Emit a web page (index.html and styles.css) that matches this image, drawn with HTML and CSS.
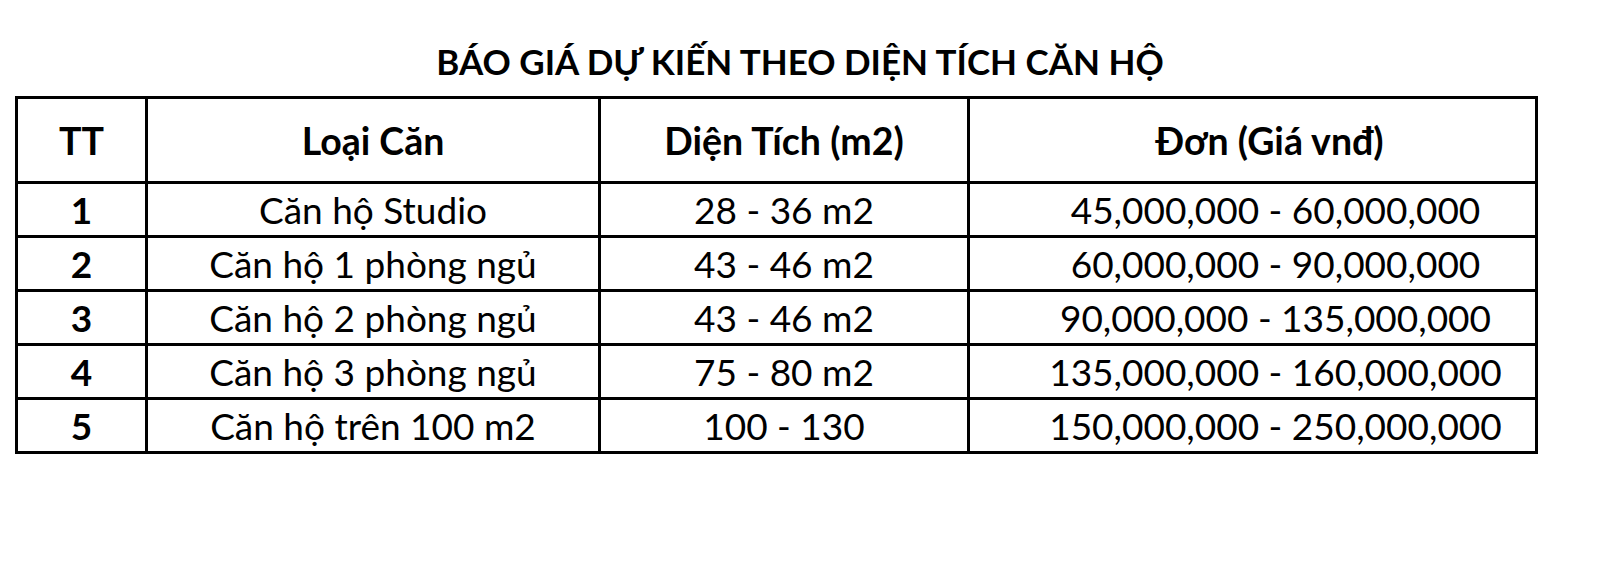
FILE: index.html
```html
<!DOCTYPE html>
<html lang="vi">
<head>
<meta charset="utf-8">
<link rel="stylesheet" href="styles.css">
</head>
<body>
<div class="page">
  <h1 class="title">BÁO GIÁ DỰ KIẾN THEO DIỆN TÍCH CĂN HỘ</h1>
  <table class="price">
    <colgroup>
      <col class="c1"><col class="c2"><col class="c3"><col class="c4">
    </colgroup>
    <thead>
      <tr><th>TT</th><th>Loại Căn</th><th>Diện Tích (m2)</th><th class="price-col">Đơn (Giá vnđ)</th></tr>
    </thead>
    <tbody>
      <tr><td class="num">1</td><td>Căn hộ Studio</td><td>28 - 36 m2</td><td class="price-col">45,000,000 - 60,000,000</td></tr>
      <tr><td class="num">2</td><td>Căn hộ 1 phòng ngủ</td><td>43 - 46 m2</td><td class="price-col">60,000,000 - 90,000,000</td></tr>
      <tr><td class="num">3</td><td>Căn hộ 2 phòng ngủ</td><td>43 - 46 m2</td><td class="price-col">90,000,000 - 135,000,000</td></tr>
      <tr><td class="num">4</td><td>Căn hộ 3 phòng ngủ</td><td>75 - 80 m2</td><td class="price-col">135,000,000 - 160,000,000</td></tr>
      <tr><td class="num">5</td><td>Căn hộ trên 100 m2</td><td>100 - 130</td><td class="price-col">150,000,000 - 250,000,000</td></tr>
    </tbody>
  </table>
</div>
</body>
</html>
```

FILE: styles.css
```css
html, body {
  margin: 0;
  padding: 0;
  background: #ffffff;
}
body {
  font-family: Lato, "Liberation Sans", sans-serif;
  color: #000;
}
.page {
  width: 1600px;
  height: 564px;
  box-sizing: border-box;
  padding: 0 0 0 15px;
}
.title {
  margin: 0 0 0 -15px;
  height: 96px;
  width: 1600px;
  box-sizing: border-box;
  padding-top: 39px;
  font-size: 35px;
  line-height: 44px;
  font-weight: 700;
  text-align: center;
}
.price {
  border-collapse: collapse;
  table-layout: fixed;
  width: 1520px;
  border: 3px solid #000;
}
.c1 { width: 130px; }
.c2 { width: 453px; }
.c3 { width: 369px; }
.c4 { width: 568px; }
.price th, .price td {
  border: 3px solid #000;
  text-align: center;
  padding: 0;
}
.price th {
  height: 82px;
  font-size: 37.5px;
  font-weight: 700;
}
.price td {
  height: 51px;
  line-height: 51px;
  font-size: 37px;
  font-weight: 400;
}
.price td.num {
  font-weight: 700;
}
.price .price-col {
  padding-left: 46px;
}
.price th.price-col {
  padding-left: 34px;
}
```
